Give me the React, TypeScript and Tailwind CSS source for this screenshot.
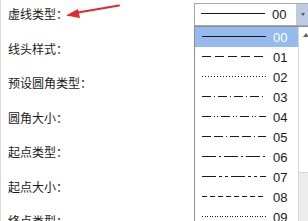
const labels = ['虚线类型：', '线头样式：', '预设圆角类型：', '圆角大小：', '起点类型：', '起点大小：', '终点类型：']

// 线型样式 -> stroke-dasharray
const dashes: { code: string; dash?: string }[] = [
  { code: '00' },
  { code: '01', dash: '9 4' },
  { code: '02', dash: '1 2' },
  { code: '03', dash: '9 3 1 3' },
  { code: '04', dash: '9 3 1 2 1 3' },
  { code: '05', dash: '9 3 9 3 1 3' },
  { code: '06', dash: '14 3 2 3' },
  { code: '07', dash: '14 3 3 3 3 3' },
  { code: '08', dash: '5 3' },
  { code: '09', dash: '1 1.5' },
]

function DashLine({ dash }: { dash?: string }) {
  return (
    <svg width="64" height="4" viewBox="0 0 64 4" className="block" shapeRendering="crispEdges">
      <line x1="0" y1="1.5" x2="64" y2="1.5" stroke="#1a1a1a" strokeWidth="1" strokeDasharray={dash} />
    </svg>
  )
}

export default function App() {
  return (
    <div
      className="relative w-[308px] h-[221px] overflow-hidden bg-white border-l border-[#dcdcdc] text-[#1a1a1a]"
      style={{ fontFamily: '"Noto Sans CJK SC", "Liberation Sans", sans-serif' }}
    >
      {/* 左侧标签 */}
      <div className="flex flex-col -mt-[3px]">
        {labels.map((l, i) => (
          <div key={l} className="h-[34.5px] flex items-center justify-between pl-[7px]">
            <span className="text-[12px] leading-none">{l}</span>
            {i === 0 && (
              <div className="w-[116px] h-[23px] mr-[-2px] flex border border-[#a8a8a8] bg-white">
                <div className="flex-1 flex items-center pl-[6px] gap-[7px]">
                  <DashLine />
                  <span className="text-[13px] leading-none" style={{ fontFamily: '"Liberation Sans", sans-serif' }}>00</span>
                </div>
                <div className="w-[13px] bg-[#bccbe2] flex items-center justify-center">
                  <span className="block w-0 h-0 border-l-[2.5px] border-r-[2.5px] border-t-[3px] border-l-transparent border-r-transparent border-t-[#4a5870]" />
                </div>
              </div>
            )}
          </div>
        ))}
      </div>

      {/* 下拉列表 */}
      <div className="absolute left-[193px] top-[26px] w-[120px] h-[200px] flex border border-[#8f8f8f] bg-white">
        <div className="w-[103px] flex flex-col">
          {dashes.map((d, i) => (
            <div
              key={d.code}
              className={`h-5 shrink-0 flex items-center pl-[7px] gap-[7px] ${i === 0 ? 'bg-[#94baee] text-white' : ''}`}
            >
              <DashLine dash={d.dash} />
              <span className="text-[13px] leading-none" style={{ fontFamily: '"Liberation Sans", sans-serif' }}>{d.code}</span>
            </div>
          ))}
        </div>
        <div className="flex-1 flex flex-col border-l border-[#d6d6d6]">
          <div className="h-[16px] flex items-center justify-center">
            <span className="block w-0 h-0 border-l-[3.5px] border-r-[3.5px] border-b-[4px] border-l-transparent border-r-transparent border-b-[#606060]" />
          </div>
          <div className="h-[129px]" />
          <div className="flex-1 bg-[#ececec] border-t border-[#d6d6d6]" />
        </div>
      </div>

      {/* 红色箭头 */}
      <svg className="absolute left-0 top-0" width="130" height="30" viewBox="0 0 130 30">
        <line x1="118" y1="5.5" x2="74" y2="13" stroke="#e12a2a" strokeWidth="2" strokeLinecap="round" />
        <polygon points="65,15.5 77,9 79,18" fill="#e12a2a" />
      </svg>
    </div>
  )
}
